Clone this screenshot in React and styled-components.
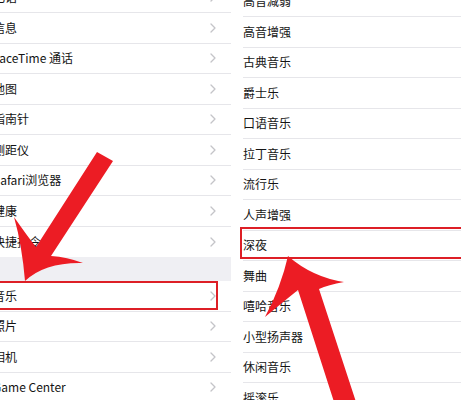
import React from "react";
import styled, { createGlobalStyle } from "styled-components";

const Global = createGlobalStyle`
  html, body { margin: 0; padding: 0; background: #ffffff; overflow: hidden; }
  body { font-family: "Noto Sans CJK SC", "Noto Sans", sans-serif; }
`;

const Stage = styled.div`
  position: relative;
  width: 461px;
  height: 400px;
  overflow: hidden;
  display: flex;
  background: #ffffff;
`;

const LeftPanel = styled.div`
  width: 231px;
  flex: none;
  display: flex;
  flex-direction: column;
  margin-top: -17.5px;
  background: #ffffff;
  overflow: hidden;
`;

const RightPanel = styled.div`
  flex: 1;
  display: flex;
  flex-direction: column;
  margin-left: 2px;
  padding-left: 10px;
  margin-top: -13.5px;
  background: #ffffff;
`;

const Group = styled.div`
  display: flex;
  flex-direction: column;
  background: #ffffff;
`;

const GroupGap = styled.div`
  height: 24px;
  flex: none;
  background: #efeff3;
`;

const Row = styled.div`
  position: relative;
  box-sizing: border-box;
  height: 30.5px;
  flex: none;
  display: flex;
  align-items: center;
  padding-right: 15px;
  border-bottom: ${(p) => (p.$last ? "none" : "1px solid #e6e6ea")};
  font-size: 12px;
  color: #141414;
  white-space: nowrap;

  ${(p) =>
    p.$boxed &&
    `
    &::after {
      content: "";
      position: absolute;
      top: ${p.$box.top}px;
      bottom: ${p.$box.bottom}px;
      left: ${p.$box.left}px;
      right: ${p.$box.right}px;
      border: 2px solid #dd1f26;
      pointer-events: none;
    }
  `}
`;

const Label = styled.span`
  flex: 1;
  line-height: 1;
  margin-left: ${(p) => p.$indent || 0}px;
`;

const Chevron = styled.svg`
  width: 6px;
  height: 10px;
  flex: none;
`;

const Overlay = styled.svg`
  position: absolute;
  left: 0;
  top: 0;
  width: 461px;
  height: 400px;
  pointer-events: none;
`;

const ChevronIcon = () => (
  <Chevron viewBox="0 0 6 10">
    <path d="M1 1 L5 5 L1 9" fill="none" stroke="#c4c4c8" strokeWidth="1.3" strokeLinecap="round" strokeLinejoin="round" />
  </Chevron>
);

const groupA = ["电话", "信息", "FaceTime 通话", "地图", "指南针", "测距仪", "Safari浏览器", "健康", "快捷指令"];
const groupB = ["音乐", "照片", "相机", "Game Center"];
const rightItems = [
  "高音减弱", "高音增强", "古典音乐", "爵士乐", "口语音乐", "拉丁音乐", "流行乐",
  "人声增强", "深夜", "舞曲", "嘻哈音乐", "小型扬声器", "休闲音乐", "摇滚乐",
];

export default function App() {
  return (
    <>
      <Global />
      <Stage>
        <LeftPanel>
          <Group>
            {groupA.map((t, i) => (
              <Row key={t} $last={i === groupA.length - 1}>
                <Label $indent={-7}>{t}</Label>
                <ChevronIcon />
              </Row>
            ))}
          </Group>
          <GroupGap />
          <Group>
            {groupB.map((t) => (
              <Row
                key={t}
                $boxed={t === "音乐"}
                $box={{ top: 0, bottom: 1, left: -4, right: 13 }}
              >
                <Label $indent={-7}>{t}</Label>
                <ChevronIcon />
              </Row>
            ))}
          </Group>
        </LeftPanel>
        <RightPanel>
          {rightItems.map((t) => (
            <Row
              key={t}
              $boxed={t === "深夜"}
              $box={{ top: -3.5, bottom: 1, left: -3, right: -10 }}
            >
              <Label>{t}</Label>
            </Row>
          ))}
        </RightPanel>
        <Overlay viewBox="0 0 461 400">
          <path
            d="M97 152 L113 161 L51 256 Q67 257 83 263 Q45 262 25 281 Q22 245 14 217 Q28 237 36 247 Z"
            fill="#ec1c24"
          />
          <path
            d="M335 405 L298 290 Q283 302 265 317 Q281 287 288 256 Q312 277 344 282 Q328 285 319 289 L357 405 Z"
            fill="#ec1c24"
          />
        </Overlay>
      </Stage>
    </>
  );
}
